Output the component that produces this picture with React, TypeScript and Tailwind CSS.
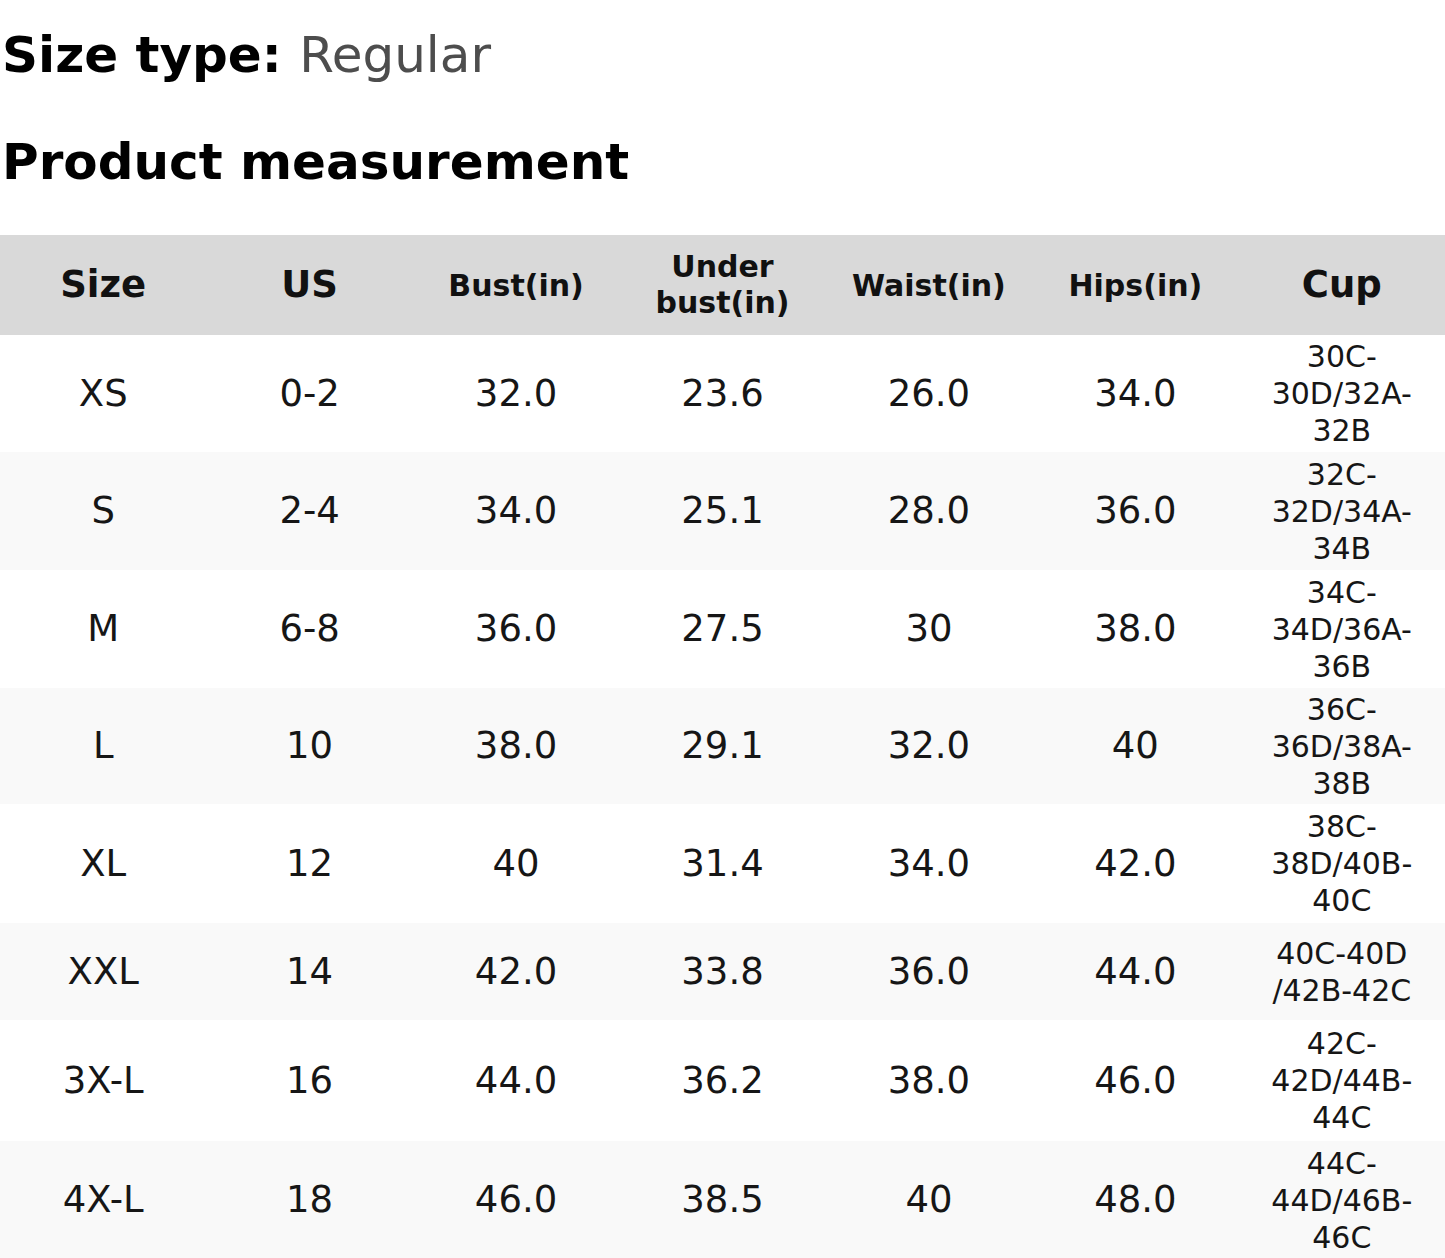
import React from "react";

type Row = {
  size: string;
  us: string;
  bust: string;
  under: string;
  waist: string;
  hips: string;
  cup: string[];
  h: string;
  bg: string;
};

const rows: Row[] = [
  { size: "XS", us: "0-2", bust: "32.0", under: "23.6", waist: "26.0", hips: "34.0", cup: ["30C-", "30D/32A-", "32B"], h: "h-[117px]", bg: "bg-white" },
  { size: "S", us: "2-4", bust: "34.0", under: "25.1", waist: "28.0", hips: "36.0", cup: ["32C-", "32D/34A-", "34B"], h: "h-[118px]", bg: "bg-[#f9f9f9]" },
  { size: "M", us: "6-8", bust: "36.0", under: "27.5", waist: "30", hips: "38.0", cup: ["34C-", "34D/36A-", "36B"], h: "h-[118px]", bg: "bg-white" },
  { size: "L", us: "10", bust: "38.0", under: "29.1", waist: "32.0", hips: "40", cup: ["36C-", "36D/38A-", "38B"], h: "h-[116px]", bg: "bg-[#f9f9f9]" },
  { size: "XL", us: "12", bust: "40", under: "31.4", waist: "34.0", hips: "42.0", cup: ["38C-", "38D/40B-", "40C"], h: "h-[119px]", bg: "bg-white" },
  { size: "XXL", us: "14", bust: "42.0", under: "33.8", waist: "36.0", hips: "44.0", cup: ["40C-40D", "/42B-42C"], h: "h-[97px]", bg: "bg-[#f9f9f9]" },
  { size: "3X-L", us: "16", bust: "44.0", under: "36.2", waist: "38.0", hips: "46.0", cup: ["42C-", "42D/44B-", "44C"], h: "h-[121px]", bg: "bg-white" },
  { size: "4X-L", us: "18", bust: "46.0", under: "38.5", waist: "40", hips: "48.0", cup: ["44C-", "44D/46B-", "46C"], h: "h-[118px]", bg: "bg-[#f9f9f9]" },
];

function Cell({ children }: { children: React.ReactNode }) {
  return (
    <div className="flex items-center justify-center text-center text-[37px] text-[#161616]">
      {children}
    </div>
  );
}

export default function App() {
  return (
    <div className="w-[1445px] h-[1258px] overflow-hidden bg-white font-['DejaVu_Sans',sans-serif] text-black">
      <div className="pl-[2px] pt-[26px] text-[50px] leading-[58px] font-bold">
        Size type: <span className="font-normal text-[#4d4d4d]">Regular</span>
      </div>
      <div className="pl-[2px] mt-[49px] text-[50px] leading-[58px] font-bold">
        Product measurement
      </div>
      <div className="mt-[44px]">
        <div className="grid grid-cols-7 h-[100px] bg-[#d9d9d9] font-bold text-[#111]">
          <div className="flex items-center justify-center text-[37px]">Size</div>
          <div className="flex items-center justify-center text-[37px]">US</div>
          <div className="flex items-center justify-center text-[30px]">Bust(in)</div>
          <div className="flex items-center justify-center text-center text-[30px] leading-[36px]">
            Under
            <br />
            bust(in)
          </div>
          <div className="flex items-center justify-center text-[30px]">Waist(in)</div>
          <div className="flex items-center justify-center text-[30px]">Hips(in)</div>
          <div className="flex items-center justify-center text-[37px]">Cup</div>
        </div>
        {rows.map((r) => (
          <div key={r.size} className={`grid grid-cols-7 ${r.h} ${r.bg}`}>
            <Cell>{r.size}</Cell>
            <Cell>{r.us}</Cell>
            <Cell>{r.bust}</Cell>
            <Cell>{r.under}</Cell>
            <Cell>{r.waist}</Cell>
            <Cell>{r.hips}</Cell>
            <div className="flex flex-col items-center justify-center text-center text-[30px] leading-[37px] text-[#161616]">
              {r.cup.map((c) => (
                <span key={c}>{c}</span>
              ))}
            </div>
          </div>
        ))}
      </div>
    </div>
  );
}
